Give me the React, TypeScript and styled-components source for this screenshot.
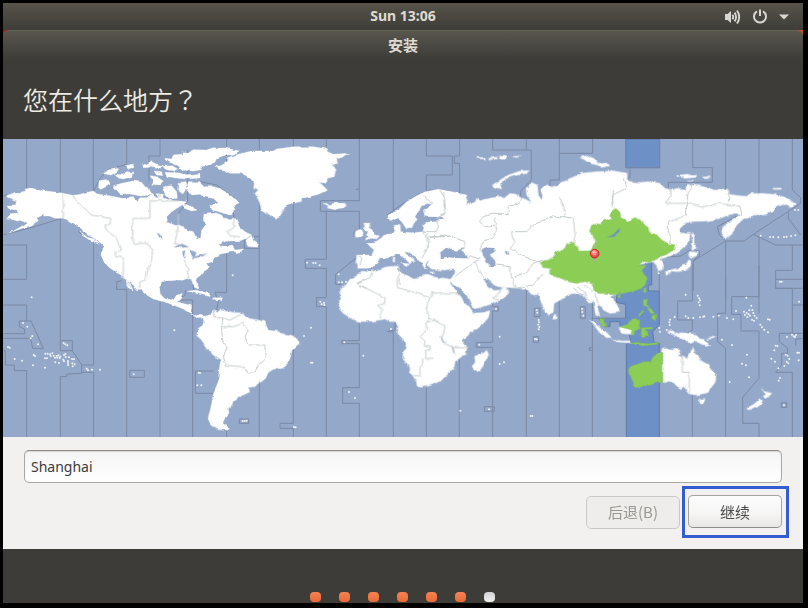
import React from "react";
import styled, { createGlobalStyle } from "styled-components";

const GlobalStyle = createGlobalStyle`
  * { box-sizing: border-box; }
  body { margin: 0; background: #000; }
`;

const latin = `"Noto Sans", "Noto Sans CJK SC", sans-serif`;
const ui = `"Noto Sans CJK SC", "Noto Sans", sans-serif`;

const Screen = styled.div`
  min-height: 100vh;
  padding: 3px 5px 5px 3px;
  display: flex;
  flex-direction: column;
  background: #000;
  color: #dfdbd2;
  font-family: ${ui};
`;

const TopBar = styled.header`
  height: 27px;
  display: grid;
  grid-template-columns: 1fr auto 1fr;
  align-items: center;
  padding: 0 14px;
  background: linear-gradient(#57534a, #3e3d38);
`;

const Clock = styled.time`
  grid-column: 2;
  padding-bottom: 2px;
  font: 700 14px/20px ${latin};
`;

const Indicators = styled.div`
  display: flex;
  justify-content: flex-end;
  align-items: center;
  gap: 11px;
`;

const Indicator = styled.button`
  display: flex;
  padding: 0;
  border: 0;
  background: none;
  color: #d8d6d0;
`;

const Installer = styled.main`
  flex: 1;
  display: flex;
  flex-direction: column;
  background: linear-gradient(90deg, #a81f2b 50%, #dd4814 50%) top / 100% 8px no-repeat #3d3c38;
`;

const TitleBar = styled.div`
  height: 29px;
  border-top: 1px solid #67645a;
  border-radius: 6px 6px 0 0;
  background: linear-gradient(#59564e, #3d3c38);
  text-align: center;
  font-size: 15px;
  line-height: 28px;
  font-weight: 700;
`;

const Heading = styled.h1`
  height: 80px;
  margin: 0;
  padding: 22px 20px;
  font-size: 25px;
  line-height: 36px;
  font-weight: 350;
  color: #eeebe3;
`;

const QuestionMark = styled.span`
  font-family: "Noto Sans CJK TC", sans-serif;
`;

const Map = styled.svg`
  display: block;
  width: 100%;
  height: auto;
  background: #94a8c9;
`;

const Form = styled.form`
  padding: 13px 21px 11px;
  background: #f2f1f0;
`;

const City = styled.input`
  display: block;
  width: 100%;
  height: 33px;
  padding: 0 6px;
  border: 1px solid #aaa9a5;
  border-top-color: #8f8e89;
  border-radius: 5px;
  outline: 0;
  background: linear-gradient(#f4f4f4, #fff);
  box-shadow: inset 0 1px 1px #d5d4d2;
  color: #3c3c3c;
  font: 14px/20px ${latin};
`;

const Actions = styled.div`
  display: flex;
  justify-content: flex-end;
  align-items: center;
  gap: 2px;
  margin: 3px -7px 0 0;
`;

const Button = styled.button`
  width: 94px;
  height: 33px;
  padding: 0;
  border: 1px solid #a5a3a0;
  border-bottom-color: #8f8d8a;
  border-radius: 5px;
  background: linear-gradient(#fdfdfd, #f5f4f3 60%, #e9e7e5);
  color: #4c4c4c;
  font: 15px/22px ${ui};
  &:disabled {
    border-color: #cac9c7;
    background: #eeedec;
    color: #9a9791;
  }
`;

const Highlight = styled.div`
  padding: 6px 4px 7px 3px;
  border: 3px solid #355bd2;
  display: flex;
`;

const Footer = styled.footer`
  flex: 1;
  min-height: 54px;
  padding-right: 1px;
  display: flex;
  align-items: flex-end;
  justify-content: center;
`;

const Steps = styled.ol`
  display: flex;
  gap: 18px;
  margin: 0;
  padding: 0 0 1px;
  list-style: none;
`;

const Step = styled.li<{ $done: boolean }>`
  width: 11px;
  height: 10px;
  border-radius: 4px;
  background: ${(p) => (p.$done ? "linear-gradient(#f58152, #e96a38)" : "linear-gradient(#d2d2d2, #efefef)")};
`;

/* Map tiles: each one has its own origin, in thirds of a map pixel. */
type Tile = { at: [number, number]; shapes: string[] };

const poly = (points: string) => `M${points}Z`;
const tile = (t: Tile, i: number) => (
  <path key={i} transform={`translate(${t.at[0]} ${t.at[1]})`} d={t.shapes.map(poly).join("")} />
);

const land: Tile[] = [
  {
    at: [0, 0],
    shapes: [
      // North America
      "20 182 45 172 62 172 75 167 72 162 88 160 105 165 130 167 165 171 190 175 218 181 240 178 262 172 280 168 290 176 310 180 335 184 370 190 400 188 412 197 420 188 440 188 455 180 475 190 490 190 520 197 535 198 560 200 550 208 535 217 515 230 500 245 503 262 520 270 535 272 560 283 580 290 588 308 602 310 605 285 617 270 610 255 612 235 640 232 665 240 672 252 690 258 700 248 712 260 718 275 735 290 755 300 740 310 720 317 690 318 665 325 655 332 680 333 695 330 705 345 730 342 725 350 710 356 705 348 690 348 680 353 658 358 655 365 640 372 638 380 622 385 628 395 622 403 610 410 600 422 587 432 592 445 597 457 588 460 578 445 575 433 560 431 548 436 535 435 505 437 485 440 478 460 480 475 495 492 520 495 530 480 550 475 545 490 535 500 555 507 575 510 572 535 582 545 600 538 618 547 612 555 600 547 585 548 570 535 550 522 520 510 495 502 460 492 432 475 425 462 410 464 400 450 385 438 395 455 399 468 388 460 378 440 367 422 345 410 325 395 310 377 303 357 305 345 313 335 300 322 280 308 262 300 258 290 235 275 215 260 190 250 165 250 148 243 130 243 132 236 110 248 115 257 95 270 60 282 25 295 50 283 80 265 65 255 50 258 30 250 20 250 35 235 55 235 50 226 25 220 20 210 45 210 50 200 22 190",
      "297 137 325 133 330 148 318 155 305 162 296 155",
      "340 152 365 145 400 138 425 142 435 155 447 160 455 180 420 183 395 178 360 176 350 165",
      "340 117 370 120 378 110 402 112 398 124 370 132 350 128",
      "308 116 330 104 358 100 350 110 330 120",
      "376 92 400 87 398 98 380 101",
      "428 86 440 90 455 80 470 88 490 92 470 100 450 97 430 98",
      "450 122 470 125 490 138 478 150 455 148 460 138",
      "462 108 485 110 488 122 470 120",
      "495 70 515 72 520 60 545 58 550 50 565 52 580 44 620 45 640 38 680 40 718 48 700 58 670 62 650 70 645 82 620 92 600 95 605 104 580 108 545 105 535 92 505 80",
      "488 94 520 92 536 102 520 108 495 102",
      "495 112 540 114 560 122 600 118 600 129 560 132 520 128 500 124",
      "565 140 600 140 615 155 640 155 665 162 682 172 690 185 706 192 718 203 700 212 705 225 698 234 670 228 650 224 636 212 655 204 640 190 610 185 600 178 575 180 560 160",
      "535 142 555 140 560 162 548 177 533 165",
      "490 155 515 152 530 170 532 190 510 192 495 178",
      "470 175 490 178 488 192 475 190",
      "548 206 575 214 592 225 575 228 553 220",
      "632 212 650 222 675 228 700 235 690 240 660 232 636 225",
      "740 312 755 302 760 318 775 328 772 337 740 334",
      "240 290 262 307 282 312 300 328 280 322 248 302",
      "560 468 590 466 625 475 633 485 600 478",
      "640 488 668 488 665 494 645 494",
    ],
  },
  {
    at: [0, 450],
    shapes: [
      // South America
      "610 95 630 90 640 78 652 82 660 75 700 82 730 85 735 95 745 100 775 105 795 110 800 125 805 135 835 140 855 150 880 155 895 162 898 175 887 185 875 197 870 220 860 240 852 246 825 250 805 262 797 280 785 290 765 305 740 308 750 320 735 328 715 335 708 345 698 350 697 362 685 370 687 385 675 398 668 415 690 430 670 432 645 424 630 408 626 392 632 370 637 345 640 325 655 290 658 250 662 225 640 210 615 185 605 165 590 152 595 130 610 120 615 105",
      "627 388 636 412 650 422 686 430 684 436 655 434 632 420 624 400",
      "790 134 806 132 808 142 792 142",
    ],
  },
  {
    at: [570, 0],
    shapes: [
      // Greenland, Iceland, British Isles
      "75 93 92 92 110 82 112 68 145 58 185 48 250 48 260 42 310 35 370 35 410 42 412 50 430 58 475 55 462 65 440 72 442 85 425 90 438 100 432 125 412 130 410 145 388 142 412 165 385 178 345 188 330 200 310 205 285 215 275 235 265 250 240 243 225 232 215 225 208 200 195 175 205 165 195 158 190 140 180 130 165 120 150 115 120 115 105 105 85 103",
      "398 205 412 206 418 212 430 205 462 205 466 212 458 218 435 224 412 219 415 212",
      "522 264 540 265 536 278 546 284 552 295 568 303 560 312 543 310 525 316 538 304 528 300 535 293 525 285",
      "497 288 515 283 520 295 515 305 495 307",
      // Europe
      "595 237 612 232 625 225 640 210 650 200 680 182 705 170 745 163 775 168 830 180 830 345 800 338 780 345 775 355 755 362 745 372 710 378 705 395 695 385 680 370 660 355 640 345 645 355 670 372 675 380 665 378 660 388 650 375 625 358 610 362 590 370 570 368 560 385 545 398 530 400 505 400 498 385 500 360 545 360 552 345 535 330 530 325 550 325 575 308 590 298 610 296 616 290 614 272 630 268 632 290 665 293 700 290 698 270 708 262 740 260 755 250 705 246 700 225 725 212 715 205 695 212 688 225 675 245 682 255 672 262 665 280 650 283 635 260 625 248 600 260 595 250",
      "695 372 712 378 705 392 712 405 700 395",
      "632 385 655 386 650 395",
      "610 365 617 367 617 382 609 380",
      "720 410 735 411 722 415",
    ],
  },
  {
    at: [1200, 0],
    shapes: [
      // Western and southern Asia
      "140 174 160 178 180 182 205 192 195 205 165 203 175 215 195 218 205 205 225 202 230 190 245 195 270 190 300 184 312 190 330 175 355 180 370 190 395 202 380 180 378 160 395 143 412 150 415 180 425 195 430 188 422 165 440 150 470 155 478 145 510 130 530 122 560 120 600 112 640 108 680 115 700 300 652 475 630 485 645 500 657 520 657 532 630 535 610 525 605 515 592 508 592 515 600 545 586 532 580 495 570 505 562 495 550 480 520 475 490 490 462 505 460 530 445 542 430 520 415 478 400 480 385 465 375 460 330 458 310 458 285 452 262 432 248 435 258 448 278 466 300 465 310 454 328 472 310 490 280 505 250 515 220 522 200 480 175 455 145 438 152 432 165 415 165 400 130 405 95 402 82 390 85 377 105 373 70 345 100 300 140 280",
      "277 150 300 135 325 120 360 108 388 107 380 115 345 122 320 130 300 145 305 165 282 160",
      "232 67 255 68 256 72 235 71",
      "265 70 290 66 292 72 270 74",
      "295 60 322 62 320 74 300 72",
      "338 64 364 63 345 68",
      "540 68 560 62 580 75 590 82 565 82 550 72",
      "590 85 612 82 628 92 605 97 595 92",
    ],
  },
  {
    at: [1770, 0],
    shapes: [
      // Siberia, Korea, Japan
      "-30 115 20 110 70 108 110 115 108 124 75 138 100 132 120 140 150 142 175 140 210 145 225 160 245 165 260 160 285 162 290 152 310 150 340 155 375 165 410 165 418 178 445 182 470 184 480 176 520 175 550 178 580 185 600 200 620 203 610 215 595 212 580 205 555 215 550 230 520 240 490 240 480 250 462 250 440 270 430 290 405 312 395 290 400 275 425 255 455 240 440 238 420 238 390 250 350 258 300 260 280 270 265 285 270 295 300 292 298 320 280 340 260 355 235 365 208 372 220 388 220 402 205 408 200 392 190 380 100 400 -30 300",
      "303 292 312 300 312 318 318 340 305 347 308 320",
      "298 350 325 353 318 363 302 370 296 362",
      "296 374 304 380 300 395 285 408 262 410 245 408 228 422 226 412 245 404 265 400 275 390 290 386",
      "272 120 290 117 310 122 320 120 318 127 285 130 272 125",
      "335 124 355 122 362 127 340 128",
      "292 138 310 138 305 142",
      "548 160 570 159 572 163 552 163",
      "0 65 20 75 22 90 0 85",
      "22 88 45 82 60 92 35 96",
    ],
  },
  {
    at: [810, 450],
    shapes: [
      // Africa
      "285 -40 315 -42 350 -55 385 -57 385 -45 392 -38 410 -30 430 -18 450 -20 460 -32 475 -32 500 -22 530 -20 545 -15 540 -5 560 20 575 38 580 50 595 65 610 85 635 83 660 77 655 98 640 115 620 130 595 150 578 165 580 175 590 190 588 208 575 215 555 230 552 250 535 262 530 270 510 290 480 302 450 307 440 300 440 292 430 275 418 258 412 235 398 217 400 200 410 190 402 165 383 145 385 120 378 110 360 110 345 102 310 108 270 110 245 102 235 95 220 85 208 72 207 55 213 40 207 25 215 10 235 -10 240 -18 265 -30 275 -42",
      "650 195 656 208 645 230 640 245 630 258 612 255 610 240 616 230 614 215 640 205",
    ],
  },
  {
    at: [1590, 450],
    shapes: [
      // Indonesia, Australia, New Zealand
      "395 202 402 192 412 190 450 195 445 213 470 220 480 207 487 185 497 205 505 212 510 225 535 240 545 255 558 265 557 290 545 305 538 322 520 326 500 330 475 326 465 305 452 310 440 303 430 292 395 292",
      "503 342 515 345 525 343 520 355 512 357",
      "693 307 703 318 725 325 710 342 698 335 708 328",
      "690 340 698 347 685 362 655 375 650 370 675 355",
      "412 137 430 138 435 148 450 143 475 145 500 152 510 162 522 163 540 182 515 178 498 168 480 176 460 160 440 155 430 148",
      "175 105 195 115 205 125 225 138 245 158 230 158 212 145 205 138 190 118",
      "245 162 275 168 300 168 302 174 260 170",
      "267 127 285 123 310 132 305 148 275 145",
      "72 88 80 90 82 100 72 103",
      "530 163 550 153 557 154 540 162",
    ],
  },
];

const zoneLand: Tile[] = [
  {
    at: [1770, 0],
    shapes: [
      "-150 382 -125 375 -105 365 -107 350 -85 345 -75 335 -70 330 -52 322 -45 332 -36 335 -35 348 -5 348 5 345 10 330 18 322 12 315 8 300 -2 290 5 270 20 266 32 268 40 258 62 250 58 237 75 220 90 228 93 250 115 258 130 248 152 250 158 262 172 278 178 292 198 297 215 315 235 325 255 330 250 345 230 358 210 365 195 372 180 382 160 380 145 390 170 393 155 405 162 418 172 432 165 450 152 462 130 468 100 475 82 478 60 475 25 475 10 465 12 448 -15 440 -40 445 -65 440 -90 430 -118 420 -118 400 -140 398",
    ],
  },
  {
    at: [1590, 450],
    shapes: [
      "398 202 385 203 370 215 360 228 350 230 320 238 300 243 295 252 297 268 310 292 310 304 320 308 345 302 365 300 375 295 398 292",
      "270 126 290 118 300 108 315 100 330 108 325 118 328 130 315 140 310 152 303 148 305 135",
      "332 128 368 127 366 132 345 133 355 145 360 156 350 150 342 160 333 160 330 145",
      "340 42 352 45 350 60 360 72 350 68 340 60",
      "352 74 362 70 374 84 366 88",
      "365 94 380 88 380 104 365 100",
      "322 94 338 76 342 78 328 94",
      "208 100 222 102 232 125 220 123 210 114",
      "342 10 351 8 346 24 340 20",
      "262 32 276 29 268 42",
      "302 170 330 174 356 176 384 172 384 178 340 182 302 175",
    ],
  },
];

const lakes: Tile[] = [
  {
    at: [0, 0],
    shapes: [
      "520 336 545 326 568 336 545 338",
      "548 348 556 345 552 368 547 366",
      "566 344 590 352 583 366 572 358",
      "575 366 600 360 622 355 605 366 578 370",
      "470 292 480 298 489 314 478 308",
      "655 333 680 320 718 318 722 334 700 328 680 330",
      "545 275 560 278 555 283",
    ],
  },
  {
    at: [1200, 0],
    shapes: [
      "118 355 130 345 138 338 150 342 165 350 175 345 188 340 185 350 200 360 206 370 170 370 140 366 120 370",
      "246 345 262 338 280 338 285 350 270 358 275 370 286 380 286 396 268 396 258 375 248 360",
      "318 348 328 350 326 356 318 354",
      "75 245 128 246 128 251 78 253",
    ],
  },
  { at: [1770, 0], shapes: ["50 307 70 298 90 280 88 294 72 305"] },
  { at: [810, 450], shapes: ["513 150 518 165 525 175 518 172 513 160", "546 180 552 195 553 204 547 192"] },
];

const borders: { at: [number, number]; d: string }[] = [
  {
    at: [0, 0],
    d: "M190 175V250M218 181L240 208 275 240 332 250 330 268 315 270 320 285 350 312 362 345 345 350 347 365 370 368V425L395 460M535 198H450V250H398V325H437L458 340 455 375 445 395 437 435 420 440 415 460M535 235V275L530 300 525 325 545 330M550 370L563 400V430M700 248L705 275 682 290 690 303 720 305M480 190V175",
  },
  {
    at: [0, 450],
    d: "M640 80L645 95 668 100 665 130 668 170 680 190 670 215 678 240 700 243 735 245 745 265 765 262 775 240 795 220V180H745L735 155 745 135 730 115 700 125 668 125M668 100L690 105 720 90",
  },
  {
    at: [570, 0],
    d: "M700 290L718 315 710 345 695 370M700 182L720 200 725 210M750 165L760 185 765 235 740 250M718 305L780 303 810 315M740 255L745 275 738 290 700 290M505 362L515 368 510 390M548 405L540 428 500 445 530 460M625 393L632 410 625 425 630 450",
  },
  {
    at: [1200, 0],
    d: "M130 170L135 205 138 235 115 248M85 295L80 310 85 340 70 350M88 308L150 303 195 320 190 345M205 362L240 372 225 380 190 405 165 425M365 185L360 205 325 215V238H275L250 245 238 260 255 275 285 270 290 285 275 310 248 320 240 345 250 355M285 245L290 270M500 245L460 245 410 265 400 270 380 290H335V300L345 325 330 340 360 360 395 375 420 380M478 185L490 210 495 245 520 250 525 300 520 325M225 380L240 410 255 432M288 390L330 395 335 430 345 458M335 430L380 410 400 385 430 375M345 460L400 450 430 415M640 165L638 190V220M590 315L575 345",
  },
  {
    at: [1770, 0],
    d: "M100 130L108 160 68 180 66 215M240 160V185L225 205 290 205 295 170 310 150M290 205L345 218 385 205 420 210 450 210M410 165L420 190 415 205M290 205V240L235 262V290L240 300 240 325M450 210L455 240",
  },
  {
    at: [810, 450],
    d: "M268 0L345 38V55L322 62 335 72 330 102M382 -20V8L420 18 480 38 468 70 480 100 468 110 470 135 450 155 465 168 463 185H480V195H467V220H487M480 24H565M484 38V24M470 110H500L525 125 520 150 515 160 530 180 548 185M458 220V240L450 245V272H430M505 110L480 100M548 188H588M545 185L555 205M700 5L685 30 665 40 685 45",
  },
  { at: [1590, 450], d: "M398 200V292M457 212V262H478V325M145 5L160 18 168 35 178 45M165 0L190 22M195 25L205 60M130 5L145 25" },
];

const zoneLines: { at: [number, number]; d: string }[] = [
  {
    at: [0, 0],
    d: "M80 12V180M10 183L22 178M10 330H80V433H10M181 12V617M280 12V170L300 130 325 103 380 88V12M480 12V63H447V140M563 45V200L535 235M680 12V80L700 115M778 12V45M778 200V340H733V305H778M10 299L60 287 120 270 185 250M235 290L260 308 300 325M281 308V690M350 465V440L365 437M600 140L650 150 690 180 700 225 702 260M680 352V472M778 340V555",
  },
  {
    at: [0, 450],
    d: "M10 60H80V108M58 108H93L130 190H98L92 160H10M58 108V125L74 132V146H10M10 197H16V240H43V257H80V456M181 167H217V197H181ZM217 197L245 240H281M245 240V265L200 267V275H181V456M245 262H281V456M350 0V13H380V456M480 50V456M580 -14V17H556V30L535 45H578V456M640 258H586V325H640M389 256H433V277H389ZM650 75L655 50 645 22H680M680 436V456M778 295V456M718 402H746V415H718ZM625 390L630 415 655 432 686 436",
  },
  {
    at: [570, 0],
    d: "M310 12V594M409 12V60M508 12V197H391V229H508V285M409 229V373H346V400H409V488M500 368L437 418V448H455M610 12V225M709 12V63H787V120H709V168M592 240L640 205 690 175M492 305V290L510 283M498 164L506 162",
  },
  { at: [1200, 0], d: "M179 12V63H163V85H179V182M278 12V45H394V135L362 168V182M379 12V45M478 12V135H450V155M478 55H578V12M60 180L90 165 130 170" },
  {
    at: [1770, 0],
    d: "M107 12V98H209V12M120 98V128L100 136M308 12V98H367V142H235V160M407 12V165M507 12V178M607 12V165L632 188V205L490 298 463 318H407L310 378V468M382 275L388 300 407 318M382 275L450 238M407 318V500M490 298L557 330H638M507 305V535M595 232V250L632 300M607 330V406H557V460H638M232 366L272 363 300 345 328 348V362L308 378M557 433H638",
  },
  {
    at: [810, 450],
    d: "M70 144V415H30V430H70V456M169 38H140V65H169V456M268 110V167H215V176H268V308H218V355H268V456M375 110V135L352 140H370V456M469 307V456M568 220V456M668 55V65H685V78H668V172H619V187H668V456M643 365H673V379H643ZM769 10V456M793 70H810V95H793ZM790 155H806V172H790Z",
  },
  {
    at: [1590, 450],
    d: "M88 45V456M187 55V456M151 65H166V100H151ZM178 188H187V196H178ZM185 100H287M388 -50V18M443 48H487V-65M443 48V105H487V135L470 145M487 330V456M587 -20V85H563V170L587 190V456M687 -60V35H605V88H633V138H687V280L638 337V415H687V456M737 0V10H787V60H819M787 60V145M748 145H819M748 145V170L773 190V205H755V240L737 262H787V456M819 160L797 163V182M754 353H770V367H754Z",
  },
];

const islets: { at: [number, number]; dots: number[][] }[] = [
  {
    at: [0, 450],
    dots: [
      [95, 37], [69, 114], [82, 125], [97, 153], [92, 160], [114, 178], [24, 186], [29, 188], [44, 222], [66, 227], [99, 241], [135, 248], [101, 210], [105, 213],
      [136, 206], [143, 206], [150, 208], [157, 205], [152, 213], [161, 212], [170, 213], [176, 211], [165, 218], [172, 218], [181, 215], [192, 210], [196, 207], [191, 174], [196, 178], [202, 181], [207, 217],
      [216, 222], [222, 223], [190, 224], [204, 228], [204, 240], [217, 235], [224, 238], [218, 244], [166, 232], [177, 234], [135, 220], [141, 220], [179, 219], [197, 216], [192, 229], [204, 234],
      [260, 251], [264, 256], [276, 254], [300, 254], [401, 268], [592, 301], [604, 301], [596, 263], [600, 264], [523, 136], [728, 408], [734, 408], [740, 407], [585, 5], [592, -2], [698, -29],
    ],
  },
  {
    at: [810, 450],
    dots: [
      [123, 128], [102, 153], [123, 233], [127, 233], [223, 172], [280, 212], [237, 321], [255, 339], [151, 50], [155, 58], [162, 54], [163, 60], [363, 132], [689, 155], [689, 237], [702, 232], [628, 179], [678, 72], [657, 373], [571, 377],
      [782, 393], [787, 393], [72, 426], [77, 427], [111, -67], [130, -66], [137, -66], [149, -59], [206, -32], [206, -8], [216, -8], [228, -10],
    ],
  },
  {
    at: [1590, 450],
    dots: [
      [20, 75], [22, 83], [26, 105], [27, 112], [25, 119], [28, 126], [26, 133], [15, 162], [20, 163], [156, 72], [157, 81], [160, 92], [420, 104], [418, 112], [419, 120], [434, 96], [467, 94], [475, 99], [490, 99], [510, 97], [520, 95], [523, 94], [550, 95], [566, 92],
      [467, 29], [503, 32], [507, 40], [510, 46], [506, 52], [509, 61], [591, 99], [610, 103], [618, 78], [649, 38], [664, 62], [667, 75], [642, 80], [650, 84], [656, 88], [645, 90], [652, 96], [660, 92], [670, 84], [674, 92], [680, 99], [666, 104], [672, 107],
      [658, 76], [714, 103], [719, 104], [691, 119], [696, 127], [703, 134], [714, 142], [807, 50], [771, 156], [786, 149], [791, 154], [798, 150], [795, 156], [737, 182], [742, 183], [733, 196], [767, 209], [773, 212], [724, 221], [735, 230], [778, 222], [770, 230], [775, 235], [763, 243], [745, 250],
      [802, 203], [807, 203], [806, 226], [750, 279], [746, 287], [657, 277], [599, 291], [636, 236], [648, 241], [651, 209], [576, 164], [606, 180], [762, 361], [388, 129], [390, 140], [410, 135], [453, 306],
    ],
  },
  { at: [1770, 0], dots: [[512, 302], [540, 306], [550, 306], [565, 307], [582, 306], [590, 305], [603, 303], [616, 301], [570, 440], [575, 440], [615, 225], [625, 225], [206, 415], [263, 123]] },
];

const WorldMap = () => (
  <Map viewBox="9 12 2400 894" role="img" aria-label="时区">
    <defs>
      <filter id="coast" x="0" y="0" width="100%" height="100%" colorInterpolationFilters="sRGB">
        <feTurbulence type="fractalNoise" baseFrequency="0.045" numOctaves="3" seed="4" result="noise" />
        <feDisplacementMap in="SourceGraphic" in2="noise" scale="10" xChannelSelector="R" yChannelSelector="G" />
      </filter>
      <radialGradient id="pin" cx="0.4" cy="0.3" r="0.7">
        <stop offset="0" stopColor="#ffb9b5" />
        <stop offset="0.5" stopColor="#f4625f" />
        <stop offset="1" stopColor="#e23a3c" />
      </radialGradient>
    </defs>
    <g fill="#6d91c7" stroke="#6079a5" strokeWidth="3">
      <path d="M1877 12H1979V98H1877Z" />
      <path
        transform="translate(1590 450)"
        d="M365 -70V0H355V18H388V120L368 140 372 172 388 175V458H289V178L303 172 298 150 270 125V110H240V125L225 125 205 100H287V58L258 52 262 25 330 -70Z"
      />
    </g>
    <g fill="none" stroke="#7b8aa4" strokeWidth="3">
      {zoneLines.map((l, i) => (
        <path key={i} transform={`translate(${l.at[0]} ${l.at[1]})`} d={l.d} />
      ))}
    </g>
    <g filter="url(#coast)">
      <g fill="#fff" stroke="#fff">{land.map(tile)}</g>
      <g fill="#94a8c9">{lakes.map(tile)}</g>
      <g fill="none" stroke="#c6cdcc" strokeWidth="3">
        {borders.map((b, i) => (
          <path key={i} transform={`translate(${b.at[0]} ${b.at[1]})`} d={b.d} />
        ))}
      </g>
      <g fill="#8ccd56" stroke="#7fb65a">{zoneLand.map(tile)}</g>
      <g fill="#6d91c7">{tile(lakes[2], 0)}</g>
    </g>
    <g fill="#f1f4f5">
      {islets.map((g) => g.dots.map(([x, y]) => <circle key={`${g.at[0]}-${x}-${y}`} cx={g.at[0] + x} cy={g.at[1] + y} r="3" />))}
    </g>
    <path d="M1784 366V380" stroke="#a6adb0" strokeWidth="8" />
    <circle cx="1784" cy="356" r="13" fill="url(#pin)" stroke="#c8272b" strokeWidth="3" />
    <path d="M1777 352H1791M1779 358H1789" stroke="#ffd5d2" strokeWidth="2" />
  </Map>
);

const VolumeIcon = () => (
  <svg width="17" height="16" viewBox="0 0 17 16" fill="none" stroke="currentColor" strokeWidth="1.9">
    <path d="M1 5h2.5L7 2v12L3.5 11H1Z" fill="currentColor" stroke="none" />
    <path d="M8.4 5.7q1.7 2.3 0 4.6M10.6 3.6q3 4.4 0 8.8M13 1.5q4.4 6.5 0 13" />
  </svg>
);

const PowerIcon = () => (
  <svg width="16" height="16" viewBox="0 0 16 16" fill="none" stroke="currentColor" strokeWidth="2">
    <path d="M5 2.4a6 6 0 1 0 6 0M8 .5v6.5" />
  </svg>
);

const CaretIcon = () => (
  <svg width="10" height="6" viewBox="0 0 10 6" fill="currentColor">
    <path d="M0 .5h10L5 5.5Z" />
  </svg>
);

const steps = [true, true, true, true, true, true, false];

export default function App() {
  return (
    <Screen>
      <GlobalStyle />
      <TopBar>
        <Clock>Sun 13:06</Clock>
        <Indicators>
          <Indicator aria-label="音量"><VolumeIcon /></Indicator>
          <Indicator aria-label="电源"><PowerIcon /></Indicator>
          <Indicator aria-label="菜单"><CaretIcon /></Indicator>
        </Indicators>
      </TopBar>
      <Installer>
        <TitleBar>安装</TitleBar>
        <Heading>您在什么地方<QuestionMark>？</QuestionMark></Heading>
        <WorldMap />
        <Form onSubmit={(e) => e.preventDefault()}>
          <City aria-label="您在什么地方？" defaultValue="Shanghai" />
          <Actions>
            <Button type="button" disabled>后退(B)</Button>
            <Highlight>
              <Button type="submit">继续</Button>
            </Highlight>
          </Actions>
        </Form>
        <Footer>
          <Steps aria-label="安装进度">
            {steps.map((done, i) => (
              <Step key={i} $done={done} />
            ))}
          </Steps>
        </Footer>
      </Installer>
    </Screen>
  );
}
